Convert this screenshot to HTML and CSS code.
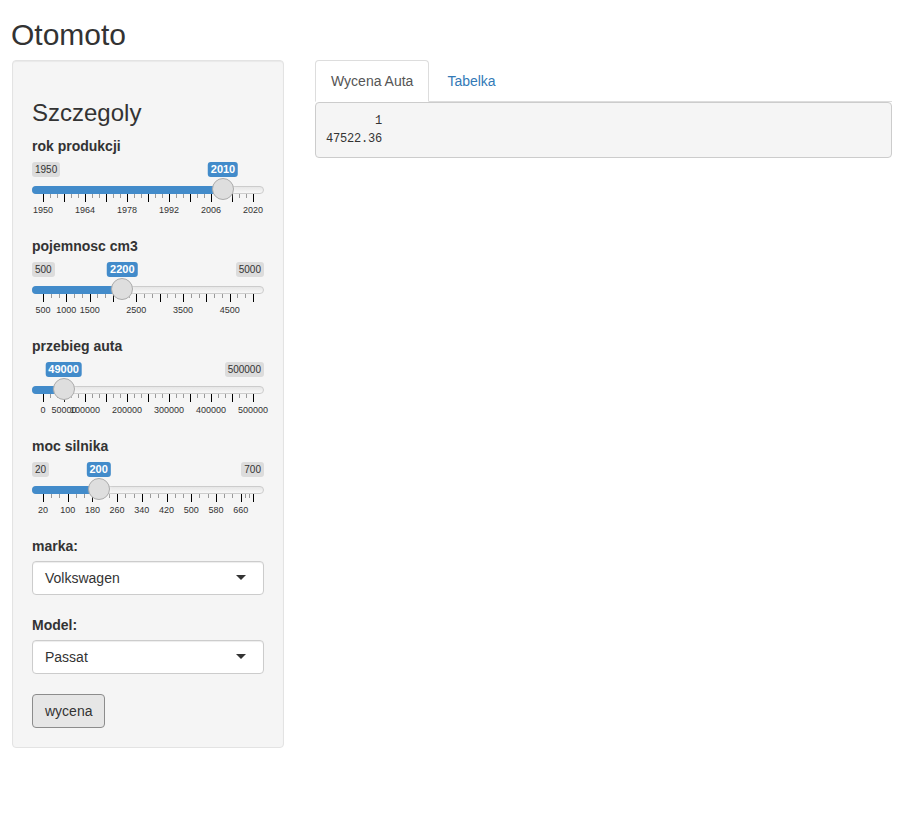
FILE: index.html
```html
<!DOCTYPE html>
<html lang="pl">
<head>
<meta charset="utf-8">
<title>Otomoto</title>
<link rel="stylesheet" href="styles.css">
</head>
<body>
<div class="page">
  <h1 class="title">Otomoto</h1>
  <div class="layout">
    <aside class="well">
      <h3 class="well-title">Szczegoly</h3>

      <div class="form-group">
        <label class="control-label">rok produkcji</label>
        <div class="irs" style="--p:0.857143">
          <span class="irs-line"></span>
          <span class="irs-bar"></span>
          <span class="irs-min">1950</span>
          <div class="irs-grid">
            <span class="pol" style="left:0%"></span>
            <span class="pol small" style="left:3.333%"></span><span class="pol small" style="left:6.667%"></span><span class="pol" style="left:10%"></span>
            <span class="pol small" style="left:13.333%"></span><span class="pol small" style="left:16.667%"></span><span class="pol" style="left:20%"></span>
            <span class="pol small" style="left:23.333%"></span><span class="pol small" style="left:26.667%"></span><span class="pol" style="left:30%"></span>
            <span class="pol small" style="left:33.333%"></span><span class="pol small" style="left:36.667%"></span><span class="pol" style="left:40%"></span>
            <span class="pol small" style="left:43.333%"></span><span class="pol small" style="left:46.667%"></span><span class="pol" style="left:50%"></span>
            <span class="pol small" style="left:53.333%"></span><span class="pol small" style="left:56.667%"></span><span class="pol" style="left:60%"></span>
            <span class="pol small" style="left:63.333%"></span><span class="pol small" style="left:66.667%"></span><span class="pol" style="left:70%"></span>
            <span class="pol small" style="left:73.333%"></span><span class="pol small" style="left:76.667%"></span><span class="pol" style="left:80%"></span>
            <span class="pol small" style="left:83.333%"></span><span class="pol small" style="left:86.667%"></span><span class="pol" style="left:90%"></span>
            <span class="pol small" style="left:93.333%"></span><span class="pol small" style="left:96.667%"></span><span class="pol" style="left:100%"></span>
            <span class="gtext" style="left:0%">1950</span>
            <span class="gtext" style="left:20%">1964</span>
            <span class="gtext" style="left:40%">1978</span>
            <span class="gtext" style="left:60%">1992</span>
            <span class="gtext" style="left:80%">2006</span>
            <span class="gtext" style="left:100%">2020</span>
          </div>
          <span class="irs-single">2010</span>
          <span class="irs-handle"></span>
        </div>
      </div>

      <div class="form-group">
        <label class="control-label">pojemnosc cm3</label>
        <div class="irs" style="--p:0.377778">
          <span class="irs-line"></span>
          <span class="irs-bar"></span>
          <span class="irs-min">500</span>
          <span class="irs-max">5000</span>
          <div class="irs-grid">
            <span class="pol" style="left:0%"></span>
            <span class="pol small" style="left:3.704%"></span><span class="pol small" style="left:7.407%"></span><span class="pol" style="left:11.111%"></span>
            <span class="pol small" style="left:14.815%"></span><span class="pol small" style="left:18.519%"></span><span class="pol" style="left:22.222%"></span>
            <span class="pol small" style="left:25.926%"></span><span class="pol small" style="left:29.630%"></span><span class="pol" style="left:33.333%"></span>
            <span class="pol small" style="left:37.037%"></span><span class="pol small" style="left:40.741%"></span><span class="pol" style="left:44.444%"></span>
            <span class="pol small" style="left:48.148%"></span><span class="pol small" style="left:51.852%"></span><span class="pol" style="left:55.556%"></span>
            <span class="pol small" style="left:59.259%"></span><span class="pol small" style="left:62.963%"></span><span class="pol" style="left:66.667%"></span>
            <span class="pol small" style="left:70.370%"></span><span class="pol small" style="left:74.074%"></span><span class="pol" style="left:77.778%"></span>
            <span class="pol small" style="left:81.481%"></span><span class="pol small" style="left:85.185%"></span><span class="pol" style="left:88.889%"></span>
            <span class="pol small" style="left:92.593%"></span><span class="pol small" style="left:96.296%"></span><span class="pol" style="left:100%"></span>
            <span class="gtext" style="left:0%">500</span>
            <span class="gtext" style="left:11.111%">1000</span>
            <span class="gtext" style="left:22.222%">1500</span>
            <span class="gtext" style="left:44.444%">2500</span>
            <span class="gtext" style="left:66.667%">3500</span>
            <span class="gtext" style="left:88.889%">4500</span>
          </div>
          <span class="irs-single">2200</span>
          <span class="irs-handle"></span>
        </div>
      </div>

      <div class="form-group">
        <label class="control-label">przebieg auta</label>
        <div class="irs" style="--p:0.098">
          <span class="irs-line"></span>
          <span class="irs-bar"></span>
          <span class="irs-max">500000</span>
          <div class="irs-grid">
            <span class="pol" style="left:0%"></span>
            <span class="pol small" style="left:3.333%"></span><span class="pol small" style="left:6.667%"></span><span class="pol" style="left:10%"></span>
            <span class="pol small" style="left:13.333%"></span><span class="pol small" style="left:16.667%"></span><span class="pol" style="left:20%"></span>
            <span class="pol small" style="left:23.333%"></span><span class="pol small" style="left:26.667%"></span><span class="pol" style="left:30%"></span>
            <span class="pol small" style="left:33.333%"></span><span class="pol small" style="left:36.667%"></span><span class="pol" style="left:40%"></span>
            <span class="pol small" style="left:43.333%"></span><span class="pol small" style="left:46.667%"></span><span class="pol" style="left:50%"></span>
            <span class="pol small" style="left:53.333%"></span><span class="pol small" style="left:56.667%"></span><span class="pol" style="left:60%"></span>
            <span class="pol small" style="left:63.333%"></span><span class="pol small" style="left:66.667%"></span><span class="pol" style="left:70%"></span>
            <span class="pol small" style="left:73.333%"></span><span class="pol small" style="left:76.667%"></span><span class="pol" style="left:80%"></span>
            <span class="pol small" style="left:83.333%"></span><span class="pol small" style="left:86.667%"></span><span class="pol" style="left:90%"></span>
            <span class="pol small" style="left:93.333%"></span><span class="pol small" style="left:96.667%"></span><span class="pol" style="left:100%"></span>
            <span class="gtext" style="left:0%">0</span>
            <span class="gtext" style="left:10%">50000</span>
            <span class="gtext" style="left:20%">100000</span>
            <span class="gtext" style="left:40%">200000</span>
            <span class="gtext" style="left:60%">300000</span>
            <span class="gtext" style="left:80%">400000</span>
            <span class="gtext" style="left:100%">500000</span>
          </div>
          <span class="irs-single">49000</span>
          <span class="irs-handle"></span>
        </div>
      </div>

      <div class="form-group">
        <label class="control-label">moc silnika</label>
        <div class="irs" style="--p:0.264706">
          <span class="irs-line"></span>
          <span class="irs-bar"></span>
          <span class="irs-min">20</span>
          <span class="irs-max">700</span>
          <div class="irs-grid">
            <span class="pol" style="left:0%"></span>
            <span class="pol small" style="left:3.922%"></span><span class="pol small" style="left:7.843%"></span><span class="pol" style="left:11.765%"></span>
            <span class="pol small" style="left:15.686%"></span><span class="pol small" style="left:19.608%"></span><span class="pol" style="left:23.529%"></span>
            <span class="pol small" style="left:27.451%"></span><span class="pol small" style="left:31.373%"></span><span class="pol" style="left:35.294%"></span>
            <span class="pol small" style="left:39.216%"></span><span class="pol small" style="left:43.137%"></span><span class="pol" style="left:47.059%"></span>
            <span class="pol small" style="left:50.980%"></span><span class="pol small" style="left:54.902%"></span><span class="pol" style="left:58.824%"></span>
            <span class="pol small" style="left:62.745%"></span><span class="pol small" style="left:66.667%"></span><span class="pol" style="left:70.588%"></span>
            <span class="pol small" style="left:74.510%"></span><span class="pol small" style="left:78.431%"></span><span class="pol" style="left:82.353%"></span>
            <span class="pol small" style="left:86.275%"></span><span class="pol small" style="left:90.196%"></span><span class="pol" style="left:94.118%"></span>
            <span class="pol small" style="left:96.078%"></span><span class="pol small" style="left:98.039%"></span><span class="pol" style="left:100%"></span>
            <span class="gtext" style="left:0%">20</span>
            <span class="gtext" style="left:11.765%">100</span>
            <span class="gtext" style="left:23.529%">180</span>
            <span class="gtext" style="left:35.294%">260</span>
            <span class="gtext" style="left:47.059%">340</span>
            <span class="gtext" style="left:58.824%">420</span>
            <span class="gtext" style="left:70.588%">500</span>
            <span class="gtext" style="left:82.353%">580</span>
            <span class="gtext" style="left:94.118%">660</span>
          </div>
          <span class="irs-single">200</span>
          <span class="irs-handle"></span>
        </div>
      </div>

      <div class="form-group">
        <label class="control-label">marka:</label>
        <div class="select">Volkswagen</div>
      </div>

      <div class="form-group">
        <label class="control-label">Model:</label>
        <div class="select">Passat</div>
      </div>

      <button class="btn" type="button">wycena</button>
    </aside>

    <main class="main">
      <ul class="nav-tabs">
        <li class="active"><a href="#">Wycena Auta</a></li>
        <li><a href="#">Tabelka</a></li>
      </ul>
      <pre class="output">       1
47522.36</pre>
    </main>
  </div>
</div>
</body>
</html>
```

FILE: styles.css
```css
html, body {
  margin: 0;
  padding: 0;
  background: #fff;
}

body {
  font-family: "Liberation Sans", Arial, sans-serif;
  font-size: 14px;
  line-height: 20px;
  color: #333;
}

.page {
  padding: 0 12px;
}

.title {
  margin: 18px 0 9px -1px;
  font-size: 30px;
  line-height: 33px;
  font-weight: normal;
}

.layout {
  display: flex;
  align-items: flex-start;
  gap: 31px;
}

.well {
  width: 272px;
  flex: none;
  box-sizing: border-box;
  padding: 19px;
  background: #f5f5f5;
  border: 1px solid #e3e3e3;
  border-radius: 4px;
  box-shadow: inset 0 1px 1px rgba(0, 0, 0, 0.05);
}

.well-title {
  margin: 20px 0 10px;
  font-size: 24px;
  line-height: 26.4px;
  font-weight: normal;
}

.form-group {
  display: flow-root;
  margin-bottom: 15px;
}

.control-label {
  display: block;
  margin-bottom: 5px;
  font-weight: bold;
}

/* range slider */
.irs {
  position: relative;
  height: 60px;
}

.irs-line {
  position: absolute;
  left: 0;
  right: 0;
  top: 25px;
  height: 8px;
  box-sizing: border-box;
  border: 1px solid #ccc;
  border-radius: 8px;
  background: linear-gradient(to bottom, #dedede -50%, #fff 150%);
}

.irs-bar {
  position: absolute;
  left: 0;
  top: 25px;
  height: 8px;
  width: calc((100% - 22px) * var(--p) + 11px);
  background: #428bca;
  border-radius: 8px 0 0 8px;
}

.irs-min,
.irs-max {
  position: absolute;
  top: 1px;
  padding: 1px 3px;
  font-size: 10px;
  line-height: 13px;
  color: #333;
  background: rgba(0, 0, 0, 0.1);
  border-radius: 3px;
}

.irs-min {
  left: 0;
}

.irs-max {
  right: 0;
}

.irs-single {
  position: absolute;
  top: 1px;
  left: calc((100% - 22px) * var(--p) + 11px);
  transform: translateX(-50%);
  padding: 1px 3px;
  font-size: 11px;
  line-height: 13px;
  font-weight: bold;
  color: #fff;
  background: #428bca;
  border-radius: 3px;
  white-space: nowrap;
}

.irs-handle {
  position: absolute;
  top: 17px;
  left: calc((100% - 22px) * var(--p));
  width: 22px;
  height: 22px;
  box-sizing: border-box;
  border: 1px solid #ababab;
  background: #dedede;
  border-radius: 50%;
  box-shadow: 1px 1px 3px rgba(255, 255, 255, 0.3);
}

.irs-grid {
  position: absolute;
  left: 11px;
  right: 11px;
  top: 33px;
  height: 27px;
}

.pol {
  position: absolute;
  top: 0;
  width: 1px;
  height: 8px;
  background: #000;
}

.pol.small {
  height: 4px;
  background: #999;
}

.gtext {
  position: absolute;
  top: 12px;
  transform: translateX(-50%);
  padding: 0 3px;
  font-size: 9px;
  line-height: 9px;
  color: #333;
  white-space: nowrap;
}

/* select */
.select {
  position: relative;
  height: 34px;
  box-sizing: border-box;
  margin-bottom: 5px;
  padding: 6px 12px;
  background: #fff;
  border: 1px solid #ccc;
  border-radius: 4px;
  box-shadow: inset 0 1px 1px rgba(0, 0, 0, 0.075);
  color: #333;
}

.select::after {
  content: "";
  position: absolute;
  right: 17px;
  top: 50%;
  margin-top: -3px;
  width: 0;
  height: 0;
  border-style: solid;
  border-width: 5px 5px 0 5px;
  border-color: #333 transparent transparent transparent;
}

.btn {
  display: inline-block;
  margin: 0;
  padding: 6px 12px;
  font-family: inherit;
  font-size: 14px;
  line-height: 20px;
  color: #333;
  background: #e6e6e6;
  border: 1px solid #8c8c8c;
  border-radius: 4px;
  vertical-align: top;
}

/* main */
.main {
  width: 577px;
  flex: none;
}

.nav-tabs {
  list-style: none;
  margin: 0;
  padding: 0;
  display: flex;
  border-bottom: 1px solid #ddd;
}

.nav-tabs li {
  margin-bottom: -1px;
}

.nav-tabs a {
  display: block;
  margin-right: 2px;
  padding: 10px 15px;
  line-height: 20px;
  color: #337ab7;
  text-decoration: none;
  border: 1px solid transparent;
  border-radius: 4px 4px 0 0;
}

.nav-tabs .active a {
  color: #555;
  background: #fff;
  border-color: #ddd #ddd transparent;
}

.output {
  margin: 0;
  padding: 9px 10px;
  font-family: "Liberation Mono", "DejaVu Sans Mono", monospace;
  font-size: 12px;
  line-height: 18px;
  letter-spacing: -0.2px;
  color: #333;
  background: #f5f5f5;
  border: 1px solid #ccc;
  border-radius: 4px;
  white-space: pre;
}
```
